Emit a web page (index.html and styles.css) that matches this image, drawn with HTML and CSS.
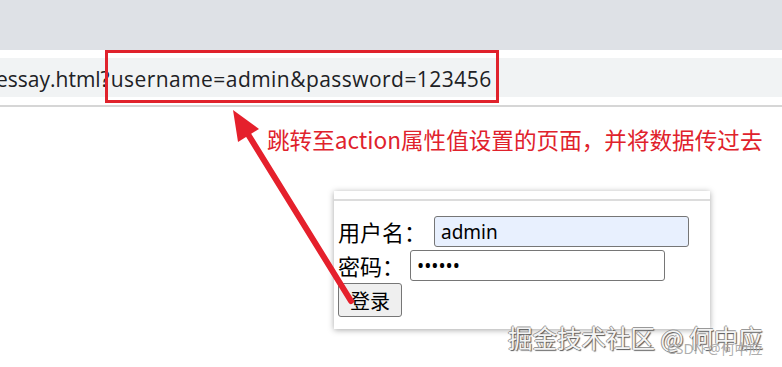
FILE: index.html
```html
<!DOCTYPE html>
<html lang="zh">
<head>
<meta charset="utf-8">
<title>form action</title>
<link rel="stylesheet" href="styles.css">
</head>
<body>
<div class="tabbar"></div>
<div class="toolbar">
  <div class="omnibox"><span class="url">essay.html?<span class="query">username=admin&amp;password=123456</span></span></div>
</div>
<div class="divider"></div>
<main class="content">
  <p class="note">跳转至action属性值设置的页面，并将数据传过去</p>
  <div class="panel">
    <div class="panel-line"></div>
    <form class="login" action="essay.html">
      <div class="row"><label class="lbl lbl-user">用户名：</label><input class="field field-auto" type="text" value="admin"></div>
      <div class="row"><label class="lbl">密码：</label><input class="field" type="password" value="123456"></div>
      <div class="row"><button class="btn" type="button">登录</button></div>
    </form>
  </div>
</main>
<div class="highlight"></div>
<svg class="arrow" width="782" height="367" viewBox="0 0 782 367" aria-hidden="true">
  <line x1="351" y1="301" x2="246" y2="131" stroke="#e5202c" stroke-width="6" stroke-linecap="round"/>
  <polygon points="233,110 259,129 238,142" fill="#e5202c"/>
</svg>
<div class="wm">掘金技术社区 @ 何中应</div>
<div class="wm2">CSDN @何中应</div>
</body>
</html>
```

FILE: styles.css
```css
html, body {
  margin: 0;
  padding: 0;
  width: 782px;
  height: 367px;
  overflow: hidden;
  background: #ffffff;
  font-family: "Noto Sans", "Noto Sans CJK SC", sans-serif;
}
.tabbar {
  height: 50px;
  background: #dee1e6;
}
.toolbar {
  height: 48px;
  padding-top: 8px;
  box-sizing: border-box;
  background: #ffffff;
}
.omnibox {
  height: 39px;
  background: #f1f3f4;
  display: flex;
  align-items: center;
  overflow: hidden;
  white-space: nowrap;
}
.url {
  font-family: "Open Sans", "Noto Sans", sans-serif;
  font-size: 21px;
  color: #202124;
  margin-left: -4px;
  padding-top: 3px;
}
.query {
  letter-spacing: 0.45px;
  margin-left: 1px;
}
.divider {
  height: 7px;
  border-bottom: 2px solid #d6d6d6;
  box-sizing: content-box;
}
.content {
  display: flex;
  flex-direction: column;
}
.note {
  margin: 17px 0 0 267px;
  font-family: "Noto Sans CJK SC", sans-serif;
  font-size: 22.6px;
  line-height: 31px;
  color: #e0222c;
  white-space: nowrap;
}
.panel {
  margin: 36px 0 0 334px;
  width: 376px;
  height: 138px;
  background: #ffffff;
  box-shadow: 0 1px 6px rgba(0, 0, 0, 0.35);
  padding-top: 8px;
  box-sizing: border-box;
}
.panel-line {
  height: 2px;
  background: #dcdcdc;
}
.login {
  display: flex;
  flex-direction: column;
  gap: 3px;
  padding: 15px 0 0 4px;
}
.row {
  display: flex;
  align-items: center;
  height: 31px;
}
.row:last-child {
  height: 34px;
  margin-top: -1px;
}
.lbl {
  font-family: "Noto Sans CJK SC", sans-serif;
  font-size: 22px;
  color: #000;
  margin-right: 6px;
  line-height: 31px;
}
.lbl-user {
  margin-right: 8px;
}
.field {
  width: 255px;
  height: 31px;
  box-sizing: border-box;
  border: 1px solid #767676;
  border-radius: 3px;
  padding: 0 6px;
  font-family: "Noto Sans", sans-serif;
  font-size: 19px;
  color: #000;
  background: #fff;
  margin: 0;
}
.field-auto {
  background: #e8f0fe;
}
.btn {
  height: 34px;
  width: 64px;
  box-sizing: border-box;
  border: 1px solid #767676;
  border-radius: 3px;
  background: #efefef;
  font-family: "Noto Sans CJK SC", sans-serif;
  font-size: 20px;
  color: #000;
  padding: 0;
  margin: 0;
}
.highlight {
  position: absolute;
  left: 105px;
  top: 50px;
  width: 394px;
  height: 53px;
  box-sizing: border-box;
  border: 3px solid #e0222c;
}
.arrow {
  position: absolute;
  left: 0;
  top: 0;
  pointer-events: none;
}
.wm {
  position: absolute;
  left: 508px;
  top: 321px;
  font-family: "Noto Sans CJK SC", sans-serif;
  font-size: 24.5px;
  line-height: 34px;
  color: #f4f4f4;
  text-shadow: 1px 1px 1px #555, -1px 0 0 #999, 0 -1px 0 #999;
  white-space: nowrap;
}
.wm2 {
  position: absolute;
  left: 667px;
  top: 339px;
  font-family: "Noto Sans", "Noto Sans CJK SC", sans-serif;
  font-size: 14px;
  line-height: 20px;
  color: rgba(160, 160, 160, 0.85);
  white-space: nowrap;
}
```
